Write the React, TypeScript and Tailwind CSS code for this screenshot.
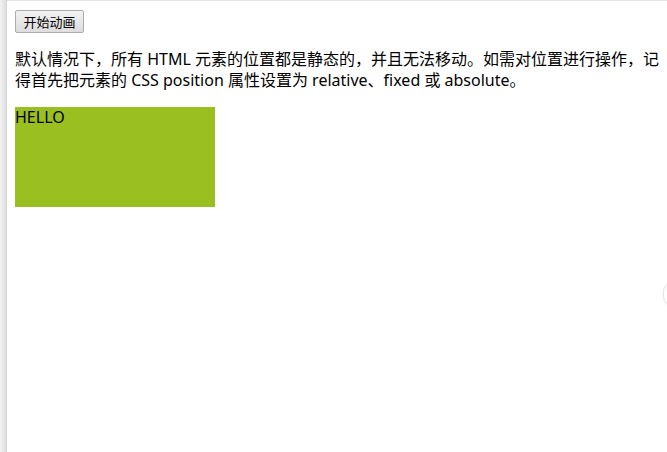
import React from 'react';

export default function App() {
  return (
    <div className="relative flex h-[452px] w-[667px] overflow-hidden bg-white font-['Noto_Sans','Noto_Sans_CJK_SC',sans-serif] text-black">
      {/* left window edge */}
      <div className="w-[7px] shrink-0 bg-gradient-to-r from-[#f3f3f3] to-[#dedede] border-r border-[#d4d4d4]" />
      <div className="flex-1 border-t border-[#e3e3e3] pt-[9px] pl-[8px]">
        <button className="block h-[23px] w-[69px] rounded-[2px] border border-[#adadad] bg-gradient-to-b from-[#f2f2f2] to-[#dddddd] text-[13px] leading-[20px] text-black">
          开始动画
        </button>
        <p className="mt-[16px] mb-[16px] w-[648px] text-[16px] leading-[21px]">
          默认情况下，所有 HTML 元素的位置都是静态的，并且无法移动。如需对位置进行操作，记得首先把元素的 CSS position 属性设置为 relative、fixed 或 absolute。
        </p>
        <div className="h-[100px] w-[200px] bg-[#9abf21] text-[16px] leading-[21px]">HELLO</div>
      </div>
      {/* partially visible round control at right edge */}
      <div className="absolute right-[-16px] top-[282px] h-[24px] w-[20px] rounded-full border border-[#e6e6e6] bg-white shadow-[0_0_2px_rgba(0,0,0,0.08)]" />
    </div>
  );
}
